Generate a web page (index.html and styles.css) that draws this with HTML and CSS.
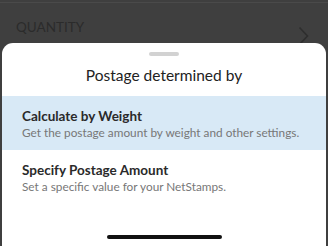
FILE: index.html
```html
<!DOCTYPE html>
<html>
<head>
<meta charset="utf-8">
<link rel="stylesheet" href="styles.css">
</head>
<body>
<div class="screen">
  <div class="backdrop">
    <div class="rule"></div>
    <div class="field">
      <div class="field-text">
        <div class="label">QUANTITY</div>
        <div class="value">1</div>
      </div>
      <svg class="chev" width="11" height="20" viewBox="0 0 11 20"><path d="M1.5 1.5 L9.5 10 L1.5 18.5" fill="none" stroke="#2e2e2e" stroke-width="1.6"/></svg>
    </div>
  </div>
  <div class="sheet">
    <div class="handle"></div>
    <div class="title">Postage determined by</div>
    <div class="option selected">
      <div class="opt-title">Calculate by Weight</div>
      <div class="opt-sub">Get the postage amount by weight and other settings.</div>
    </div>
    <div class="option">
      <div class="opt-title">Specify Postage Amount</div>
      <div class="opt-sub">Set a specific value for your NetStamps.</div>
    </div>
    <div class="spacer"></div>
    <div class="home"></div>
  </div>
</div>
</body>
</html>
```

FILE: styles.css
```css
html, body {
  margin: 0;
  padding: 0;
}
body {
  width: 328px;
  height: 246px;
  overflow: hidden;
  background: #3f3f3f;
  font-family: Lato, "Open Sans", sans-serif;
}
.screen {
  display: flex;
  flex-direction: column;
  height: 246px;
}
.backdrop {
  height: 43px;
  position: relative;
  overflow: hidden;
}
.rule {
  height: 1px;
  margin-top: 2px;
  background: #4a4a4a;
}
.field {
  display: flex;
  justify-content: space-between;
  align-items: flex-start;
  padding: 16px 19px 0 16px;
}
.label {
  font-size: 13.5px;
  color: #2b2b2b;
  line-height: 17px;
}
.value {
  font-size: 14px;
  color: #262626;
  line-height: 18px;
  margin-top: 3px;
}
.chev {
  margin-top: 7px;
}
.sheet {
  flex: 1;
  margin: 0 2px;
  background: #ffffff;
  border-radius: 11px 11px 0 0;
  display: flex;
  flex-direction: column;
  align-items: stretch;
}
.handle {
  align-self: center;
  width: 30px;
  height: 4px;
  border-radius: 2px;
  background: #d2d2d2;
  margin-top: 9px;
}
.title {
  text-align: center;
  font-size: 15.5px;
  color: #222;
  line-height: 20px;
  margin-top: 9px;
  margin-bottom: 11px;
}
.option {
  padding: 11px 20px 9px;
}
.option.selected {
  background: #d8e9f6;
}
.opt-title {
  font-size: 13.5px;
  font-weight: 700;
  color: #2a2a2a;
  line-height: 18px;
}
.opt-sub {
  font-size: 11.8px;
  color: #777;
  line-height: 16px;
}
.spacer {
  flex: 1;
}
.home {
  align-self: center;
  width: 115px;
  height: 4px;
  border-radius: 2px;
  background: #111;
  margin-bottom: 7px;
}
```
